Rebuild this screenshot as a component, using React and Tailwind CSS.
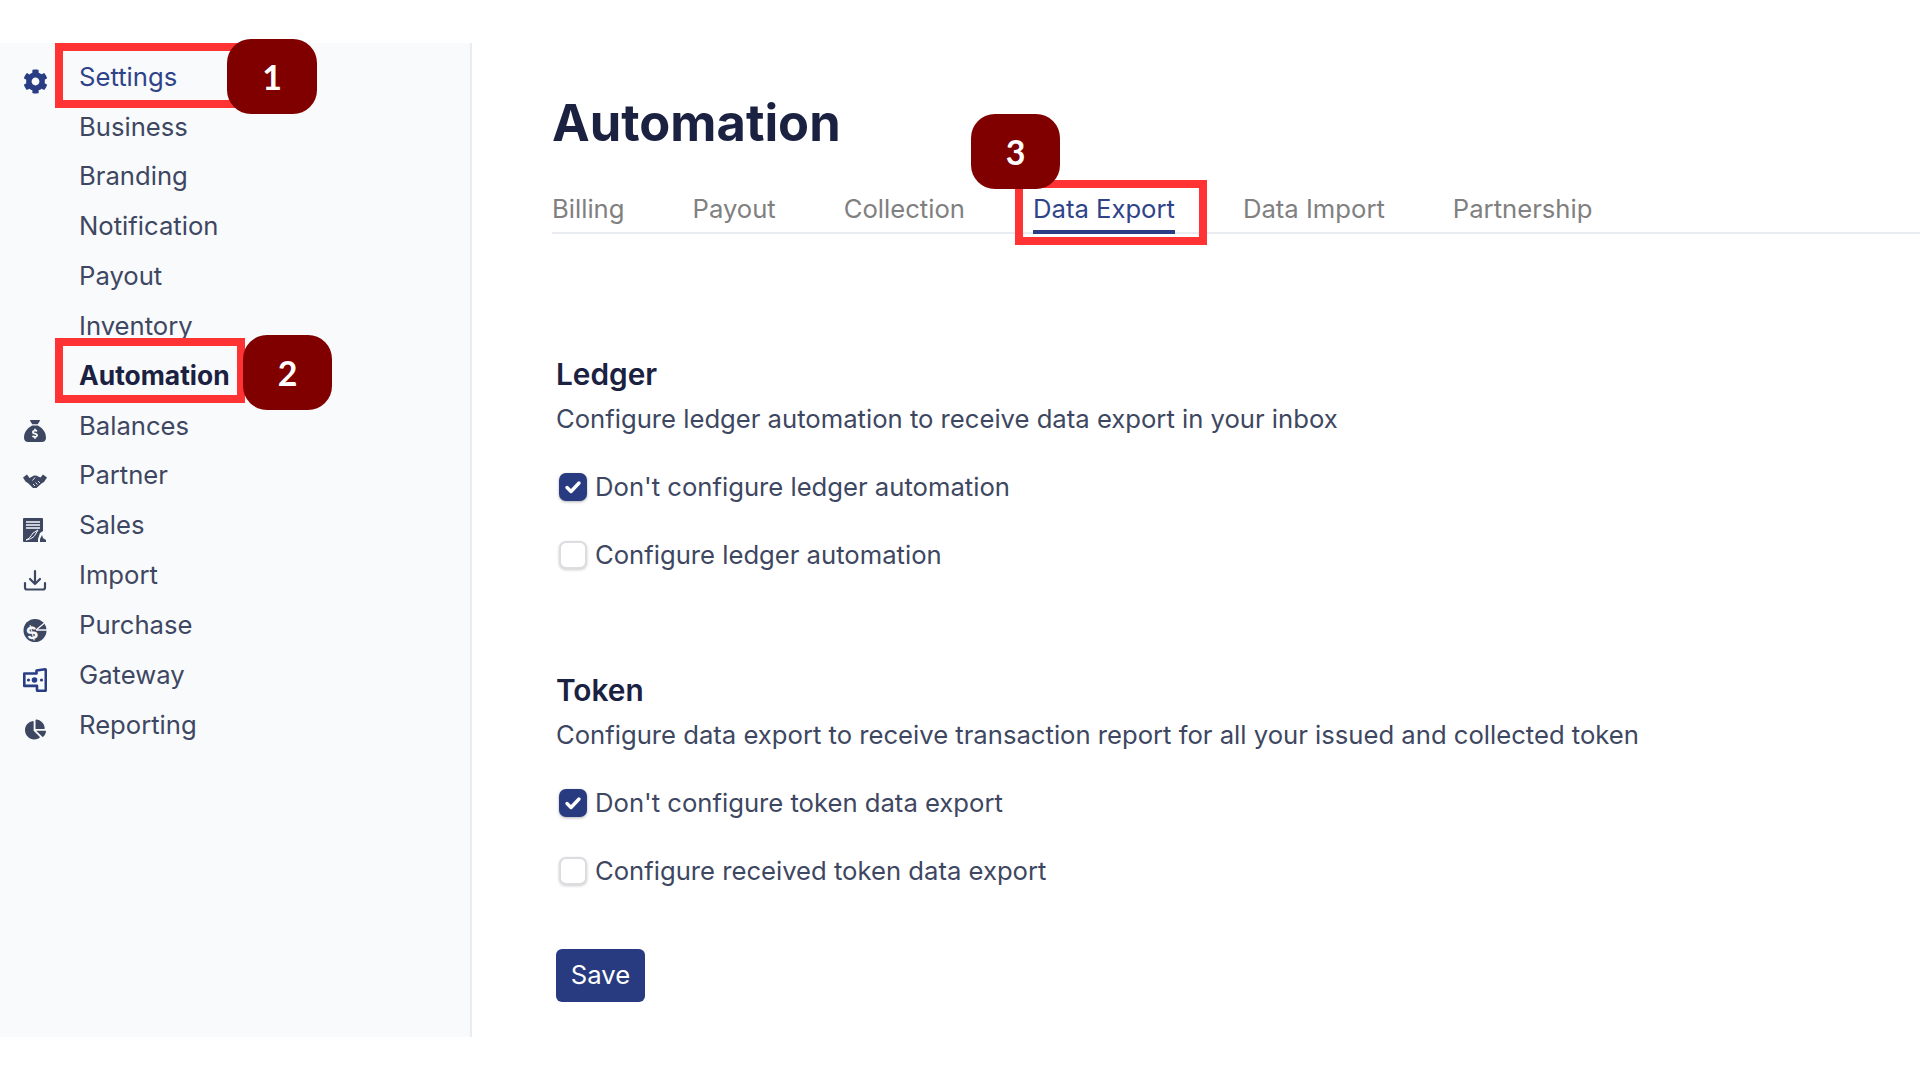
import React from "react";
import { FaCog, FaChartPie } from "react-icons/fa";
import { FaSackDollar } from "react-icons/fa6";

const Download = () => (
  <svg viewBox="0 0 24 24" className="w-[24px] h-[24px]" fill="none" stroke="#3e4761" strokeWidth="2.2" strokeLinecap="round" strokeLinejoin="round">
    <path d="M2 15v4.5a2 2 0 0 0 2 2h16a2 2 0 0 0 2-2V15" />
    <path d="M12 3v13M7 11l5 5 5-5" />
  </svg>
);
const Shake = () => (
  <svg viewBox="0 0 24 16" className="w-[24px] h-[16px]">
    <path d="M0 4.5L4 1.5 6.5 5 11 2.5 13 2.5 17.5 4.5 20 1.5 24 4.5 21 9 18.5 10.5 13.5 15 10 15 5.5 10.5 2.5 8.5z" fill="#3e4761" />
    <path d="M12 4.5L9.5 7.5M10 11l2 2M12.5 9.5l2 2M15 8l2 2" stroke="#f9fafc" strokeWidth="0.9" fill="none" />
  </svg>
);
const Sales = () => (
  <svg viewBox="0 0 24 25" className="w-[24px] h-[25px]">
    <path d="M0 1a1 1 0 0 1 1-1h18a1 1 0 0 1 1 1v23H1a1 1 0 0 1-1-1z" fill="#3e4761" />
    <path d="M3 4h14M3 7h14M3 10h14" stroke="#f9fafc" strokeWidth="1.3" />
    <path d="M3 22c3-1 5-4 7-7l5-3-3 5c-1 2-4 4-9 5z" fill="none" stroke="#f9fafc" strokeWidth="1" />
    <path d="M15 21l2-6 3-2 1 4 3 3v4H15z" fill="#f9fafc" />
    <path d="M17 24v-3l2-4 1 3 3 2v2z" fill="#3e4761" />
  </svg>
);
const Purchase = () => (
  <svg viewBox="0 0 24 24" className="w-[25px] h-[25px]">
    <circle cx="12" cy="12" r="11.5" fill="#3e4761" />
    <path d="M13 11.5L21.5 4.5M13 11.5H24" stroke="#f9fafc" strokeWidth="1.3" fill="none" />
    <text x="9" y="20.5" transform="rotate(-15 9 14)" fontSize="17" fontWeight="700" fill="#f9fafc" textAnchor="middle" fontFamily="Inter, sans-serif">$</text>
  </svg>
);
const Gateway = () => (
  <svg viewBox="0 0 24 24" className="w-[24px] h-[24px]" fill="none">
    <path d="M1.3 5.5H13.5V2.5L22 1.3a.8.8 0 0 1 .8.8v20a.8.8 0 0 1-.8.8H15a1 1 0 0 1-1-1v-4H1.3z" fill="#f9fafc" stroke="#293d85" strokeWidth="2.6" strokeLinejoin="round" />
    <circle cx="5.5" cy="12" r="1.6" fill="#293d85" />
    <circle cx="11.5" cy="12" r="2.8" fill="#293d85" />
    <circle cx="18.5" cy="12" r="1.6" fill="#293d85" />
  </svg>
);
const Icon = ({ children }) => (
  <span className="w-[24px] h-[24px] flex items-center justify-center mt-[10px]">{children}</span>
);

const items = [
  ["Settings", <FaCog className="w-[25px] h-[25px] shrink-0 text-[#293d85]" />, "text-[#2f4389]"],
  ["Business"],
  ["Branding"],
  ["Notification"],
  ["Payout"],
  ["Inventory"],
  ["Automation", null, "font-bold text-[26.4px] text-[#1b2140]"],
  ["Balances", <FaSackDollar className="w-[22px] h-[22px] shrink-0 text-[#3e4761]" />],
  ["Partner", <Shake />],
  ["Sales", <Sales />],
  ["Import", <Download />],
  ["Purchase", <Purchase />],
  ["Gateway", <Gateway />],
  ["Reporting", <FaChartPie className="w-[21px] h-[21px] shrink-0 text-[#3e4761]" />],
];

const tabs = ["Billing", "Payout", "Collection", "Data Export", "Data Import", "Partnership"];

const Check = ({ checked, label }) => (
  <div className="flex items-center h-[68px]">
    {checked ? (
      <span className="ml-[3px] w-[28px] h-[28px] rounded-[7px] bg-[#283b80] flex items-center justify-center shadow-[0_1px_3px_rgba(0,0,0,0.3)]">
        <svg viewBox="0 0 20 20" className="w-[20px] h-[20px]" fill="none" stroke="#fff" strokeWidth="3.4" strokeLinecap="round" strokeLinejoin="round">
          <path d="M4 10.5l4 4 8-8.5" />
        </svg>
      </span>
    ) : (
      <span className="ml-[3px] w-[28px] h-[28px] rounded-[7px] bg-white border-2 border-[#dcdde0] shadow-[0_1px_3px_rgba(0,0,0,0.2)]" />
    )}
    <span className="ml-[8px] text-[#3e4761]">{label}</span>
  </div>
);

const Section = ({ title, desc, opts, className }) => (
  <section className={className}>
    <h2 className="text-[29.8px] leading-[40px] font-semibold text-[#1b2140]">{title}</h2>
    <p className="mt-[5px] leading-[40px] text-[#3e4761]">{desc}</p>
    <div className="mt-[14px]">
      <Check checked label={opts[0]} />
      <Check label={opts[1]} />
    </div>
  </section>
);

const badge = "absolute h-[75px] rounded-[24px] bg-[#800000] text-white font-['Lato',sans-serif] font-bold text-[34px] flex items-center justify-center";
const box = "absolute h-[65px] border-[8px] border-[#ff3333]";

export default function App() {
  return (
    <div className="relative w-[1920px] h-[1080px] bg-white overflow-hidden flex items-start pt-[43px] text-[25.65px] font-['Inter',sans-serif]">
      <aside className="w-[472px] h-[994px] shrink-0 bg-[#f9fafc] border-r-2 border-[#e9ecf1] pt-[9px] pl-[23px]">
        {items.map(([label, icon, cls]) => (
          <div key={label} className="flex items-center h-[49.85px]">
            <Icon>{icon}</Icon>
            <span className={`ml-[32px] ${cls || "text-[#3e4761]"}`}>{label}</span>
          </div>
        ))}
      </aside>

      <main className="flex-1 pl-[80px]">
        <h1 className="text-[50.6px] leading-[60px] font-bold text-[#1b2140] mt-[50px]">Automation</h1>
        <nav className="mt-[39px] h-[42px] flex gap-[68px] border-b-2 border-[#e9ecf1]">
          {tabs.map((t) => (
            <span
              key={t}
              className={`h-[42px] leading-[34px] ${t === "Data Export" ? "text-[#2f4389] border-b-4 border-[#2a3d85]" : "text-[#808080]"}`}
            >
              {t}
            </span>
          ))}
        </nav>
        <div className="pl-[4px]">
          <Section
            className="mt-[120px]"
            title="Ledger"
            desc="Configure ledger automation to receive data export in your inbox"
            opts={["Don't configure ledger automation", "Configure ledger automation"]}
          />
          <Section
            className="mt-[81px]"
            title="Token"
            desc="Configure data export to receive transaction report for all your issued and collected token"
            opts={["Don't configure token data export", "Configure received token data export"]}
          />
          <button className="mt-[44px] w-[89px] h-[53px] rounded-[6px] bg-[#283b80] text-white">Save</button>
        </div>
      </main>

      <div className={`${box} left-[55px] top-[43px] w-[190px]`} />
      <div className={`${box} left-[55px] top-[338px] w-[190px]`} />
      <div className={`${box} left-[1015px] top-[180px] w-[192px]`} />
      <div className={`${badge} left-[227px] top-[39px] w-[90px]`}>1</div>
      <div className={`${badge} left-[243px] top-[335px] w-[89px]`}>2</div>
      <div className={`${badge} left-[971px] top-[114px] w-[89px]`}>3</div>
    </div>
  );
}
